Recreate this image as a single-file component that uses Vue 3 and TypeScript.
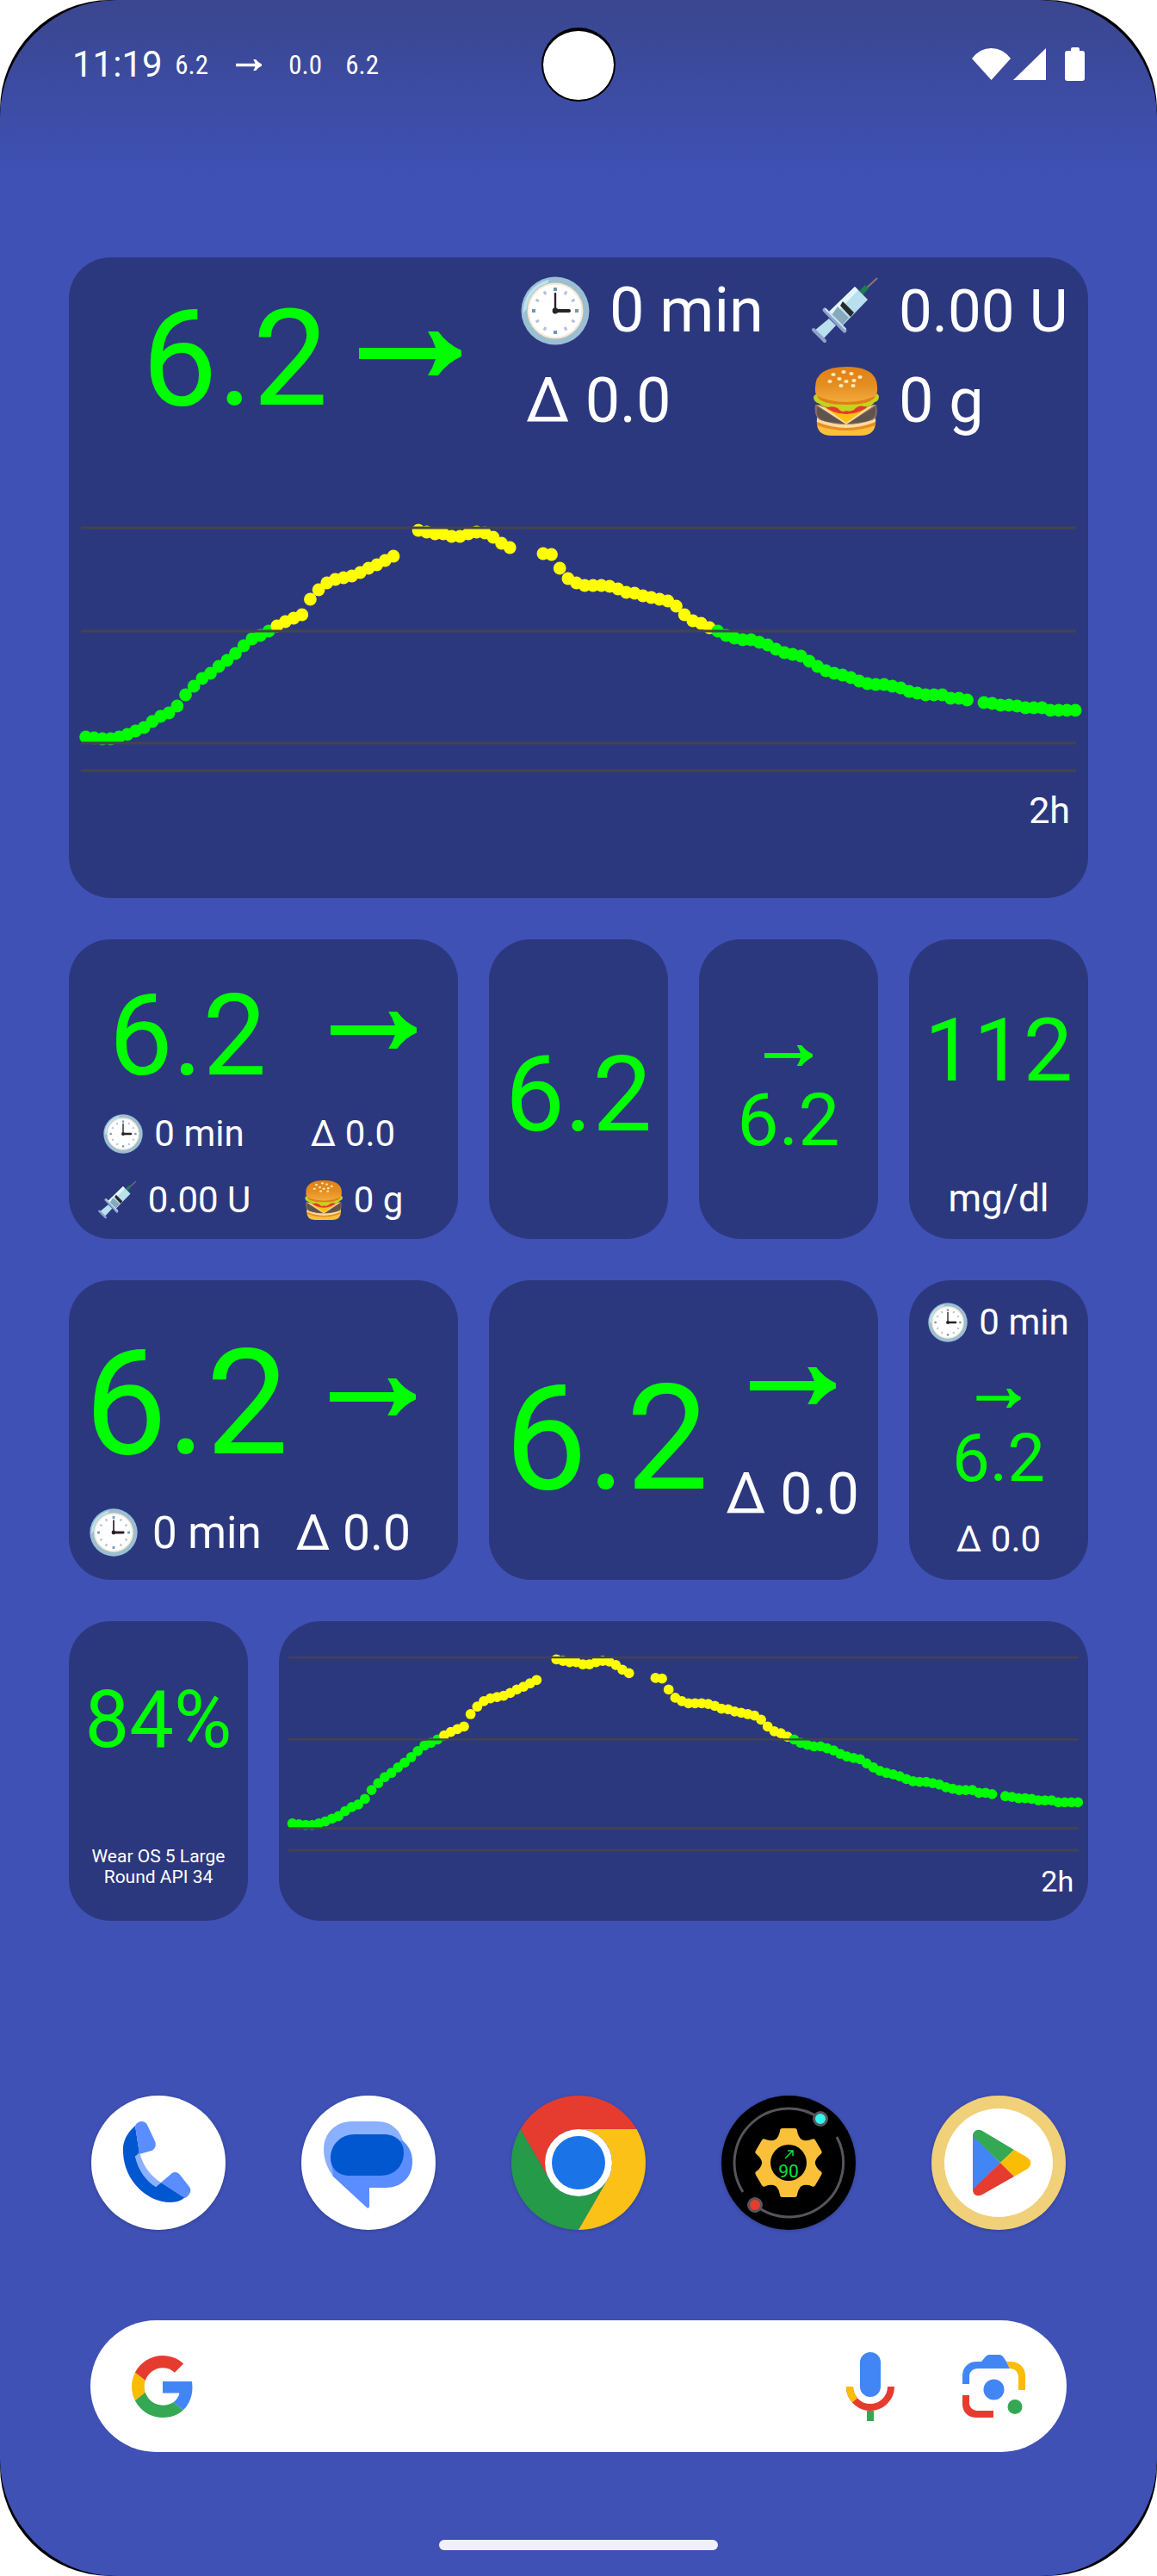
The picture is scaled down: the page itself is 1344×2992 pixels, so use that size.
<script setup lang="ts">
interface Dot {
  x: number
  y: number
  high: boolean
}

const PLOT_WIDTH = 1184
const PLOT_HEIGHT = 438
const HIGH_LIMIT = 172
const guides: number[] = [53, 173, 303, 335]

// One reading per minute over two hours; null marks a missed reading.
const readings: (number | null)[] = [
  296, 297, 298, 298, 296, 293, 289, 285, 278, 272, 268, 260, 247, 237, 228, 222, 214, 207, 199, 190,
  182, 178, 173, 167, 162, 158, 154, 136, 125, 117, 113, 111, 109, 105, 100, 96, 91, 86, null, null,
  56, 58, 60, 60, 63, 63, 60, 58, 59, 64, 71, 76, null, null, null, 83, 84, 100, 112, 117,
  120, 120, 120, 121, 124, 128, 129, 132, 134, 136, 138, 144, 154, 161, 164, 169, 173, 178, 181, 183,
  183, 186, 189, 194, 198, 200, 202, 208, 214, 219, 222, 224, 227, 231, 234, 235, 235, 237, 239, 243,
  245, 247, 247, 247, 251, 251, 253, null, 256, 257, 259, 259, 260, 262, 262, 262, 265, 265, 265, 265,
]

const dots: Dot[] = readings.flatMap((y, i) =>
  y === null ? [] : [{ x: 19.6 + i * 9.66, y, high: y < HIGH_LIMIT }],
)

const hours = [0, 30, 60, 90, 120, 150, 180, 210, 240, 270, 300, 330]
const seeds = [
  [27, 9], [39, 6], [48, 8], [58, 12], [23, 17], [34, 14], [42, 17], [51, 16], [36, 22], [50, 22],
]
</script>

<template>
  <div class="device">
    <svg class="defs" width="0" height="0" aria-hidden="true">
      <linearGradient id="bun" x1="0" y1="0" x2="0" y2="1">
        <stop offset="0" stop-color="#df8016" />
        <stop offset="0.5" stop-color="#e58e22" />
        <stop offset="1" stop-color="#f4ad3e" />
      </linearGradient>
      <symbol id="arrow" viewBox="0 0 119 51">
        <path fill="currentColor" d="M0 19H89Q86 9 80 0H92Q103 15 119 22V29Q103 36 92 51H80Q86 42 89 32H0Z" />
      </symbol>
      <symbol id="clock" viewBox="0 0 80 80">
        <circle cx="40" cy="40" r="39.5" fill="#9bbfd2" />
        <path d="M3 43A37 37 0 0 1 33 4L31 8A33 33 0 0 0 7 37Z" fill="#bde3ef" />
        <circle cx="40" cy="40" r="31.5" fill="#fff" stroke="#fbe7d2" stroke-width="2" />
        <rect
          v-for="h in hours"
          :key="h"
          :x="h % 90 ? 38.5 : 38"
          :y="h % 90 ? 14 : 13"
          :width="h % 90 ? 3 : 4"
          height="4"
          :fill="h % 90 ? '#b3bfdc' : '#6f96b6'"
          :transform="`rotate(${h} 40 40)`"
        />
        <path d="M40 20V40" stroke="#2a2326" stroke-width="2.4" stroke-linecap="round" />
        <path d="M40 40H56" stroke="#2a2326" stroke-width="4" stroke-linecap="round" />
        <circle cx="40" cy="40" r="3.4" fill="#2a2326" />
      </symbol>
      <symbol id="syringe" viewBox="0 0 80 80">
        <path d="M64 15L78 2" stroke="#8f7470" stroke-width="2" />
        <path d="M57 17L64 10L68 14L61 22Z" fill="#1c7d4d" />
        <path d="M22 49L30 57L15 73L5 63Z" fill="#b9e0ee" />
        <path d="M52 12L67 27L37 58L21 42Z" fill="#b9e0ee" />
        <path d="M52 12L56 16L27 46L21 42Z" fill="#e3f6fb" />
        <path d="M32 35L45 48L37 57L25 45Z" fill="#86a9bc" />
        <path d="M38 29L51 42L47 47L35 34Z" fill="#272a2e" />
        <path d="M17 39L40 63" stroke="#8fa3cd" stroke-width="5" stroke-linecap="round" />
        <path d="M18 38L41 61" stroke="#c3e4f1" stroke-width="2" stroke-linecap="round" />
        <path d="M4 62L17 75" stroke="#8fa3cd" stroke-width="4" stroke-linecap="round" />
      </symbol>
      <symbol id="burger" viewBox="0 0 80 80">
        <path d="M8 60H76Q78 80 58 80H25Q6 80 8 60Z" fill="#fabf3c" />
        <path d="M8 61Q42 80 76 61V68Q42 80 8 68Z" fill="#e88d22" />
        <path d="M8 56Q42 76 76 56V64Q42 78 8 64Z" fill="#fbdb9d" />
        <path d="M6 44H77Q80 60 72 62Q42 72 12 62Q4 58 6 44Z" fill="#8a6a61" />
        <path d="M8 46L40 66L22 64Q10 62 8 54ZM76 46L44 66L62 64Q74 62 76 54Z" fill="#5f544d" />
        <path d="M7 44Q42 56 76 44L42 67Z" fill="#fbdb9d" />
        <path d="M17 47H67L42 65Z" fill="#fdbf10" />
        <path d="M14 44H70Q58 55 42 55Q26 55 14 44Z" fill="#e5392d" />
        <path d="M4 35Q6 30 10 33H74Q78 29 80 34Q80 40 75 41Q70 48 63 46Q56 44 51 50Q46 53 42 51Q37 54 32 48Q26 45 21 47Q14 46 11 43Q4 41 4 35Z" fill="#c3d31f" />
        <path d="M6 24Q6 0 42 0Q78 0 78 24Q79 34 72 37Q58 43 42 43Q26 43 12 37Q5 34 6 24Z" fill="url(#bun)" />
        <path d="M8 34Q24 41 42 41Q60 41 76 34Q72 44 42 44Q12 44 8 34Z" fill="#e07f16" />
        <ellipse v-for="(s, i) in seeds" :key="i" :cx="s[0]" :cy="s[1]" rx="2.6" ry="2" fill="#fbe9b8" />
      </symbol>
    </svg>

    <main class="screen">
      <header class="status">
        <div class="status-left">
          <time class="time">11:19</time>
          <div class="notices">
            <span class="notice">6.2</span>
            <span class="notice"><svg class="notice-arrow"><use href="#arrow" /></svg></span>
            <span class="notice">0.0</span>
            <span class="notice">6.2</span>
          </div>
        </div>
        <span class="camera"></span>
        <svg class="signals" viewBox="0 0 131 40" role="img" aria-label="Wi-Fi, mobile signal, battery">
          <path d="M22.500 38L0 13Q9 1 22.500 1Q36 1 45 13Z" fill="#fff" />
          <path d="M86 1V38H48Z" fill="#fff" />
          <path d="M115 4V2Q115 0 117 0H123Q125 0 125 2V4H128Q131 4 131 7V36Q131 39 128 39H111Q108 39 108 36V7Q108 4 111 4Z" fill="#fff" />
        </svg>
      </header>

      <section class="widgets">
        <article class="card overview">
          <div class="overview-head">
            <div class="overview-value">
              <strong class="value v156">6.2</strong>
              <svg class="arrow arrow-xl"><use href="#arrow" /></svg>
            </div>
            <div class="info info-xl"><svg><use href="#clock" /></svg><span>0 min</span></div>
            <div class="info info-xl"><svg><use href="#syringe" /></svg><span class="t69">0.00 U</span></div>
            <div class="info info-xl plain"><span>Δ 0.0</span></div>
            <div class="info info-xl"><svg><use href="#burger" /></svg><span>0 g</span></div>
          </div>
          <div class="overview-plot">
            <svg class="plot" :viewBox="`0 0 ${PLOT_WIDTH} ${PLOT_HEIGHT}`">
              <circle v-for="d in dots" :key="d.x" :cx="d.x" :cy="d.y" r="7.4" :class="d.high ? 'high' : 'ok'" />
              <line v-for="g in guides" :key="g" x1="14" x2="1170" :y1="g" :y2="g" class="guide" />
              <text x="1163" y="396" class="span">2h</text>
            </svg>
          </div>
        </article>

        <article class="card wide detail">
          <div class="detail-head">
            <strong class="value v132">6.2</strong>
            <svg class="arrow arrow-lg"><use href="#arrow" /></svg>
          </div>
          <div class="detail-grid">
            <div class="info info-sm"><svg><use href="#clock" /></svg><span>0 min</span></div>
            <div class="info info-sm"><span>Δ 0.0</span></div>
            <div class="info info-sm"><svg><use href="#syringe" /></svg><span>0.00 U</span></div>
            <div class="info info-sm"><svg><use href="#burger" /></svg><span>0 g</span></div>
          </div>
        </article>

        <article class="card only-value"><strong class="value v123">6.2</strong></article>

        <article class="card trend-value">
          <svg class="arrow arrow-sm"><use href="#arrow" /></svg>
          <strong class="value v86">6.2</strong>
        </article>

        <article class="card unit-value">
          <strong class="value v102">112</strong>
          <span class="unit">mg/dl</span>
        </article>

        <article class="card wide timed">
          <div class="timed-head">
            <strong class="value v171">6.2</strong>
            <svg class="arrow arrow-lg"><use href="#arrow" /></svg>
          </div>
          <div class="timed-foot">
            <div class="info info-md"><svg><use href="#clock" /></svg><span>0 min</span></div>
            <span class="t57">Δ 0.0</span>
          </div>
        </article>

        <article class="card wide side">
          <strong class="value v171">6.2</strong>
          <div class="side-col">
            <svg class="arrow arrow-lg"><use href="#arrow" /></svg>
            <span class="t66">Δ 0.0</span>
          </div>
        </article>

        <article class="card stack">
          <div class="info info-sm"><svg><use href="#clock" /></svg><span>0 min</span></div>
          <div class="stack-mid">
            <svg class="arrow arrow-xs"><use href="#arrow" /></svg>
            <strong class="value v78">6.2</strong>
          </div>
          <div class="info info-sm"><span>Δ 0.0</span></div>
        </article>

        <article class="card battery">
          <strong class="value v92">84%</strong>
          <span class="battery-name">Wear OS 5 Large Round API 34</span>
        </article>

        <article class="card plot-card">
          <svg class="plot" :viewBox="`0 0 ${PLOT_WIDTH} ${PLOT_HEIGHT}`">
            <circle v-for="d in dots" :key="d.x" :cx="d.x" :cy="d.y" r="7.4" :class="d.high ? 'high' : 'ok'" />
            <line v-for="g in guides" :key="g" x1="14" x2="1170" :y1="g" :y2="g" class="guide" />
            <text x="1163" y="396" class="span">2h</text>
          </svg>
        </article>
      </section>

      <nav class="dock" aria-label="Favourite apps">
        <button class="app" type="button" aria-label="Phone">
          <svg viewBox="0 0 156 156">
            <circle cx="78" cy="78" r="78" fill="#fff" />
            <path d="M51 35C41 44 36 54 37 66C38 98 64 124 92 124C100 124 106 121 109 118L81 101L75 106L51 71L56 67Z" fill="#0057d0" />
            <path d="M51 35C54 29 62 28 65 34L74 53C76 58 74 62 70 64L56 68Z" fill="#5a8dff" />
            <path d="M56 66L51 71C54 86 64 100 75 106L81 101C70 94 61 83 57 69Z" fill="#8ab0ff" />
            <path d="M81 101L94 90C97 88 101 89 103 92L114 106C117 110 115 115 109 119L105 117Z" fill="#5a8dff" />
          </svg>
        </button>
        <button class="app" type="button" aria-label="Messages">
          <svg viewBox="0 0 156 156">
            <circle cx="78" cy="78" r="78" fill="#fff" />
            <path d="M58 30H88C106 30 119 43 119 62L37 94C30 84 26 74 26 62C26 44 40 30 58 30Z" fill="#8ab0ff" />
            <path d="M34 70L37 94L76 130Q79 132 79 128V107H98C116 107 129 95 129 77C129 66 125 58 117 52Z" fill="#5a8dff" />
            <path d="M62 45H96C110 45 119 54 119 66C119 82 108 93 92 93H56C42 93 34 84 34 72C34 57 46 45 62 45Z" fill="#0057d0" />
          </svg>
        </button>
        <button class="app" type="button" aria-label="Chrome">
          <svg viewBox="0 0 156 156">
            <path d="M10.500 39A78 78 0 0 1 145.500 39H78A39 39 0 0 0 44.200 97.500Z" fill="#e53c2f" />
            <path d="M10.500 39A78 78 0 0 0 78 156L111.800 97.500A39 39 0 0 1 44.200 97.500Z" fill="#259a48" />
            <path d="M145.500 39A78 78 0 0 1 78 156L111.800 97.500A39 39 0 0 0 78 39Z" fill="#fcc116" />
            <circle cx="78" cy="78" r="39" fill="#fff" />
            <circle cx="78" cy="78" r="31" fill="#1b73e8" />
          </svg>
        </button>
        <button class="app" type="button" aria-label="Watch settings">
          <svg viewBox="0 0 156 156">
            <circle cx="78" cy="78" r="78" fill="#000" />
            <path d="M115 27A63 63 0 0 0 25 112M134 48A63 63 0 0 1 39 127" fill="none" stroke="#55565c" stroke-width="3" />
            <circle cx="115" cy="27" r="7.500" fill="#37f3ee" stroke="#55565c" stroke-width="3" />
            <circle cx="39" cy="127" r="7.500" fill="#e53c2f" stroke="#55565c" stroke-width="3" />
            <circle cx="78" cy="78" r="31" fill="#fbc03a" />
            <path
              v-for="a in [0, 60, 120, 180, 240, 300]"
              :key="a"
              d="M71 38H85Q88 38 88 41Q89 48 94 52L78 60L62 52Q67 48 68 41Q68 38 71 38Z"
              fill="#fbc03a"
              :transform="`rotate(${a} 78 78)`"
            />
            <circle cx="78" cy="78" r="21" fill="#000" />
            <path d="M74 73L83 64M77 64H83V70" fill="none" stroke="#00e63c" stroke-width="1.500" />
            <text x="78" y="95" text-anchor="middle" class="badge">90</text>
          </svg>
        </button>
        <button class="app" type="button" aria-label="Play Store">
          <svg viewBox="0 0 156 156">
            <circle cx="78" cy="78" r="78" fill="#f1d07a" />
            <circle cx="78" cy="78" r="63" fill="#fff" />
            <path d="M48 46V110L80 78Z" fill="#4285f4" />
            <path d="M48 47C48 41 54 38 59 41L96 63L80 78Z" fill="#34a853" />
            <path d="M96 63L110 71C117 75 117 82 110 86L96 94L80 78Z" fill="#fbbc04" />
            <path d="M48 109C48 116 54 118 59 115L96 94L80 78Z" fill="#e53c2f" />
          </svg>
        </button>
      </nav>

      <form class="search" role="search" @submit.prevent>
        <svg class="g-logo" viewBox="0 0 48 48" aria-hidden="true">
          <path fill="#e53c2f" d="M24 9.500c3.540 0 6.710 1.220 9.210 3.600l6.850-6.850C35.900 2.380 30.470 0 24 0 14.620 0 6.510 5.380 2.560 13.220l7.980 6.190C12.430 13.720 17.740 9.500 24 9.500z" />
          <path fill="#4285f4" d="M46.980 24.550c0-1.570-.15-3.090-.38-4.550H24v9.020h12.940c-.58 2.960-2.260 5.480-4.780 7.180l7.730 6c4.510-4.180 7.090-10.360 7.090-17.650z" />
          <path fill="#fbbc04" d="M10.530 28.590c-.48-1.450-.76-2.990-.76-4.590s.27-3.140.76-4.590l-7.980-6.190C.92 16.460 0 20.120 0 24c0 3.880.92 7.540 2.560 10.780l7.970-6.190z" />
          <path fill="#34a853" d="M24 48c6.480 0 11.930-2.130 15.890-5.810l-7.730-6c-2.150 1.450-4.920 2.300-8.160 2.300-6.260 0-11.570-4.220-13.470-9.910l-7.980 6.190C6.510 42.620 14.620 48 24 48z" />
        </svg>
        <input class="search-box" type="search" aria-label="Search" />
        <button class="tool mic" type="button" aria-label="Voice search">
          <svg viewBox="0 0 56 80">
            <rect x="16" y="0" width="24" height="52" rx="12" fill="#4285f4" />
            <path d="M4 40A24 24 0 0 0 52 40" fill="none" stroke="#e53c2f" stroke-width="8" />
            <path d="M4 40Q4 49 10 56" fill="none" stroke="#fbbc04" stroke-width="8" />
            <rect x="24" y="68" width="8" height="12" fill="#34a853" />
          </svg>
        </button>
        <button class="tool lens" type="button" aria-label="Search by image">
          <svg viewBox="0 0 73 73">
            <path d="M0 34V24C0 14 8 8 16 8H22L27 2Q29 0 31 0H43Q45 0 47 2L51 8L55 16H18C12 16 8 20 8 25V34Z" fill="#4285f4" />
            <path d="M51 8H56C66 8 73 15 73 24V41H65V26C65 20 61 16 55 16Z" fill="#fbbc04" />
            <path d="M0 47V57C0 67 7 73 16 73H36V65H18C12 65 8 61 8 56V47Z" fill="#e53c2f" />
            <circle cx="36.500" cy="40.500" r="12" fill="#4285f4" />
            <circle cx="61" cy="60.500" r="8.500" fill="#34a853" />
          </svg>
        </button>
      </form>

      <div class="handle"></div>
    </main>
  </div>
</template>

<style>
body {
  margin: 0;
  background: #fff;
}
</style>

<style scoped>
.device {
  background: #000;
  border-radius: 128px;
  font-family: Roboto, "Noto Sans", sans-serif;
  line-height: 1;
  color: #fff;
}
.defs {
  position: absolute;
}
.screen {
  display: flex;
  flex-direction: column;
  min-height: 100vh;
  box-sizing: border-box;
  padding: 0 80px 30px;
  border-radius: 136px;
  background: linear-gradient(#3a468f, #3f51b5 210px);
}
svg {
  display: block;
  flex: none;
}

/* status bar */
.status {
  position: relative;
  display: flex;
  align-items: center;
  justify-content: space-between;
  height: 150px;
  margin-bottom: 149px;
  padding: 0 4px;
}
.status-left {
  display: flex;
  align-items: center;
  gap: 18px;
}
.time {
  font-size: 42px;
}
.notices {
  display: flex;
  gap: 34px;
}
.notice {
  display: flex;
  align-items: center;
  justify-content: center;
  width: 32px;
  height: 32px;
  font-family: "Roboto Condensed", "Liberation Sans Narrow", Roboto, sans-serif;
  font-size: 31px;
}
.notice-arrow {
  width: 30px;
  height: 13px;
}
.camera {
  position: absolute;
  left: 50%;
  top: 32px;
  width: 82px;
  height: 80px;
  margin-left: -43px;
  border: 2px solid #000;
  border-top-width: 4px;
  border-radius: 50%;
  background: #fff;
}
.signals {
  width: 131px;
  height: 40px;
}

/* widget grid */
.widgets {
  display: grid;
  grid-template-columns: repeat(5, 1fr);
  grid-auto-rows: 348px;
  gap: 48px 36px;
}
.card {
  display: flex;
  flex-direction: column;
  align-items: center;
  min-width: 0;
  box-sizing: border-box;
  border-radius: 48px;
  background: #2c387e;
}
.wide {
  grid-column: span 2;
}
.value {
  color: #0f0;
  font-weight: 400;
}
.arrow {
  color: #0f0;
}
.v78 { font-size: 78px; }
.v86 { font-size: 86px; }
.v92 { font-size: 92px; }
.v102 { font-size: 102px; }
.v123 { font-size: 123px; }
.v132 { font-size: 132px; }
.v156 { font-size: 156px; }
.v171 { font-size: 171px; }
.t57 { font-size: 57px; }
.t66 { font-size: 66px; }
.arrow-xl { width: 119px; height: 51px; }
.arrow-lg { width: 100px; height: 43px; }
.arrow-sm { width: 56px; height: 24px; }
.arrow-xs { width: 52px; height: 22px; }
.info {
  display: flex;
  align-items: center;
  white-space: nowrap;
}
.info-xl { gap: 23px; font-size: 72px; }
.info-md { gap: 17px; font-size: 51px; }
.info-sm { gap: 13px; font-size: 42px; }
.info-xl svg { width: 80px; height: 80px; }
.info-md svg { width: 56px; height: 56px; }
.info-sm svg { width: 46px; height: 46px; }
.info-xl .t69 { font-size: 69px; }

.overview {
  grid-column: 1 / -1;
  grid-row: span 2;
  align-items: stretch;
}
.overview-head {
  display: grid;
  grid-template-columns: 525fr 336fr 323fr;
  grid-template-rows: 104px 106px;
  height: 216px;
  box-sizing: border-box;
  padding-top: 10px;
}
.overview-value {
  grid-row: span 2;
  display: flex;
  align-items: center;
  justify-content: center;
  gap: 36px;
  padding: 6px 0 0 16px;
}
.overview-value .arrow,
.detail-head .arrow,
.timed-head .arrow {
  margin-bottom: 14px;
}
.plain {
  padding-left: 6px;
}
.overview-plot {
  display: flex;
  flex: 1;
  align-items: center;
}
.plot {
  width: 100%;
  height: auto;
}
.ok { fill: #0f0; }
.high { fill: #ff0; }
.guide {
  stroke: #444449;
  stroke-width: 3;
}
.span {
  fill: #fff;
  font-size: 43px;
  text-anchor: end;
}

.detail {
  align-items: stretch;
  padding-top: 37px;
}
.detail-head {
  display: grid;
  grid-template-columns: 276fr 156fr;
  align-items: center;
  justify-items: center;
  height: 150px;
  padding-right: 20px;
}
.detail-grid {
  display: grid;
  grid-template-columns: 1fr 1fr;
  grid-auto-rows: 77px;
  justify-items: center;
  padding: 0 18px;
}
.only-value {
  justify-content: center;
  padding-top: 12px;
}
.trend-value {
  justify-content: center;
  gap: 20px;
  padding-top: 28px;
}
.unit-value {
  justify-content: space-between;
  padding: 78px 0 25px;
}
.unit {
  font-size: 44px;
}
.timed {
  align-items: stretch;
  gap: 37px;
  padding: 57px 18px 0;
}
.timed-head {
  display: flex;
  align-items: center;
  gap: 48px;
}
.timed-foot {
  display: flex;
  align-items: center;
  gap: 40px;
  height: 56px;
  padding-left: 6px;
}
.side {
  flex-direction: row;
  align-items: flex-start;
  gap: 20px;
  padding: 98px 18px 0;
}
.side-col {
  display: flex;
  flex-direction: column;
  align-items: center;
  gap: 72px;
  padding-top: 3px;
}
.stack {
  justify-content: space-between;
  padding: 26px 0;
}
.stack-mid {
  display: flex;
  flex-direction: column;
  align-items: center;
  gap: 20px;
  padding-top: 20px;
}
.battery {
  justify-content: space-between;
  padding: 69px 20px 39px;
}
.battery-name {
  font-size: 21px;
  line-height: 24px;
  text-align: center;
}
.plot-card {
  grid-column: span 4;
}

/* dock */
.dock {
  display: grid;
  grid-template-columns: repeat(5, 1fr);
  column-gap: 36px;
  justify-items: center;
  margin-top: 203px;
}
.app,
.tool {
  padding: 0;
  border: 0;
  background: none;
  cursor: pointer;
}
.app {
  width: 156px;
  height: 156px;
  border-radius: 50%;
  box-shadow: 0 1px 4px rgba(0, 0, 0, 0.2);
}
.badge {
  fill: #00e63c;
  font-size: 21px;
  font-family: Roboto, sans-serif;
}

/* search */
.search {
  display: flex;
  align-items: center;
  height: 153px;
  margin: 105px 25px 0;
  padding: 0 48px;
  border-radius: 77px;
  background: #fff;
}
.g-logo {
  width: 72px;
  height: 72px;
}
.search-box {
  flex: 1;
  min-width: 0;
  height: 80px;
  margin: 0 24px;
  padding: 0;
  border: 0;
  outline: 0;
  background: none;
  color: #202124;
  font: 42px Roboto, sans-serif;
}
.mic {
  width: 56px;
  margin-right: 79px;
}
.lens {
  width: 73px;
}
.handle {
  align-self: center;
  width: 324px;
  height: 12px;
  margin-top: 102px;
  border-radius: 6px;
  background: #f0effa;
}
</style>
